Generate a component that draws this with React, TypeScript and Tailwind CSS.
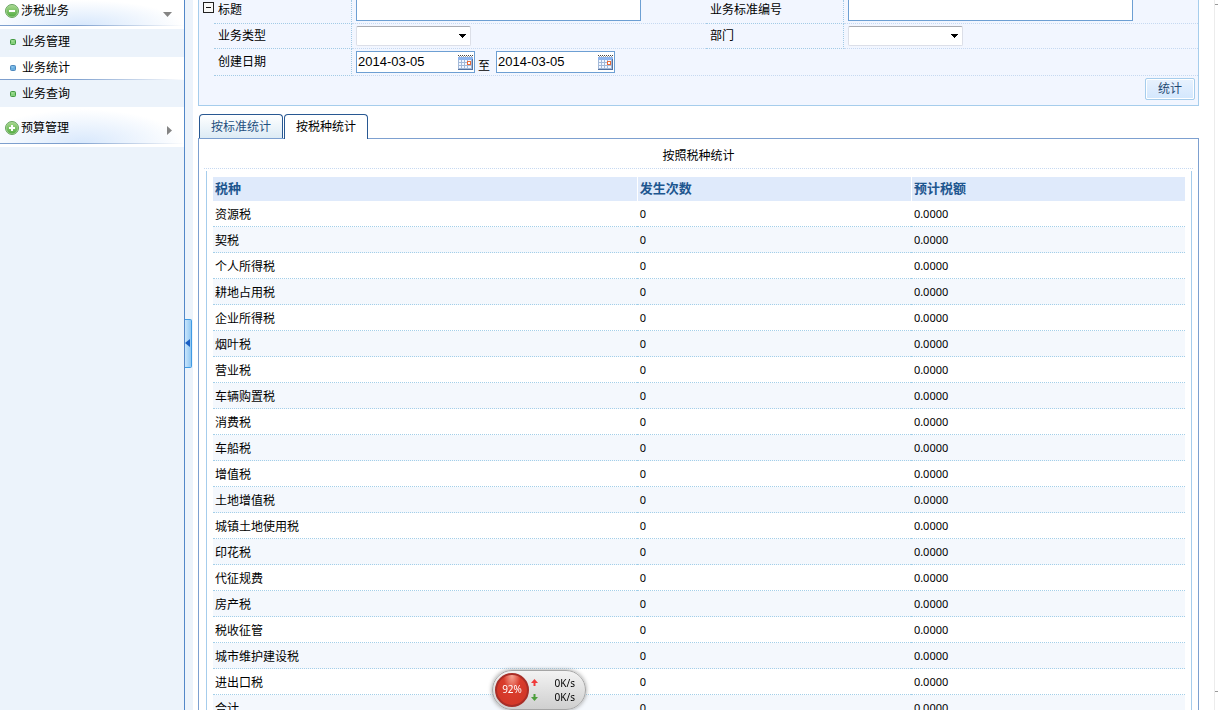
import { useState } from "react"

const taxes = [
    "资源税", "契税", "个人所得税", "耕地占用税", "企业所得税", "烟叶税", "营业税",
    "车辆购置税", "消费税", "车船税", "增值税", "土地增值税", "城镇土地使用税", "印花税",
    "代征规费", "房产税", "税收征管", "城市维护建设税", "进出口税", "合计",
]

function RoundIcon({ plus = false }: { plus?: boolean }) {
    return (
        <svg width="14" height="14" viewBox="0 0 14 14" className="shrink-0">
            <defs>
                <linearGradient id="leaf" x1="0" y1="0" x2="0" y2="1">
                    <stop offset="0" stopColor="#a5d88c" />
                    <stop offset="1" stopColor="#55ad43" />
                </linearGradient>
            </defs>
            <circle cx="7" cy="7" r="6.5" fill="#a9d59b" stroke="#68a55e" />
            <circle cx="7" cy="7" r="5.5" fill="url(#leaf)" />
            <path d={plus ? "M4 7h6M7 4v6" : "M4 7h6"} stroke="#fff" strokeWidth="2" />
        </svg>
    )
}

function Dot({ active = false }: { active?: boolean }) {
    return (
        <svg width="6" height="6" viewBox="0 0 6 6" className="shrink-0">
            <rect x="0.5" y="0.5" width="5" height="5" rx="1" fill={active ? "#68aee0" : "#85d07b"} stroke={active ? "#4f88bd" : "#459a43"} />
            <path d="M1.5 2h2" stroke={active ? "#a5d5f3" : "#b3e5a7"} />
        </svg>
    )
}

function CalendarIcon() {
    return (
        <svg width="15" height="16" viewBox="0 0 15 16" shapeRendering="crispEdges">
            <path d="M0 1.5h15" stroke="#444" strokeDasharray="1 1" />
            <path d="M1 2.5h14" stroke="#999" strokeDasharray="1 1" />
            <rect x="0" y="3" width="15" height="13" fill="#a3b9d8" />
            <rect x="0" y="3" width="15" height="3" fill="#8db4ee" />
            <path d="M1 6h2v2H1zM4 6h2v2H4zM7 6h2v2H7zM10 6h3v2h-3zM1 9h2v2H1zM4 9h2v2H4zM7 9h2v2H7zM10 9h3v2h-3zM1 12h2v2H1zM4 12h2v2H4zM7 12h2v2H7zM10 12h3v2h-3z" fill="#f2f7ff" />
            <path d="M0 15.5h15M14.5 5v11" stroke="#54719f" />
            <rect x="9.5" y="7.5" width="3" height="3" fill="#fff" stroke="#ec6a35" />
        </svg>
    )
}

function DateInput({ id, label }: { id: string; label: string }) {
    return (
        <div className="flex h-[22px] w-[119px] items-center border border-[#6d9fd3] bg-white pr-px">
            <input id={id} aria-label={label} defaultValue="2014-03-05" className="h-5 w-0 flex-1 pl-px pb-px font-['Liberation_Sans',sans-serif] text-[13px] outline-none" />
            <button type="button" aria-label="选择日期">
                <CalendarIcon />
            </button>
        </div>
    )
}

function SelectBox({ id }: { id: string }) {
    return (
        <div className="grid w-[115px] items-center">
            <select id={id} className="col-start-1 row-start-1 h-5 w-full appearance-none rounded-xs border border-[#dcdfe8] border-t-[#abadb3] bg-white outline-none">
                <option value=""></option>
            </select>
            <svg width="7" height="4" viewBox="0 0 7 4" className="pointer-events-none col-start-1 row-start-1 mr-[5px] justify-self-end">
                <path d="M0 0h7v1H6v1H5v1H4v1H3V3H2V2H1V1H0z" />
            </svg>
        </div>
    )
}

const fieldLabel = "flex items-center border-b border-r border-dotted border-[#a3cbe6] pl-1"
const fieldValue = "flex items-center border-b border-dotted border-[#c6d9f1] pl-1"

function SearchForm() {
    return (
        <form className="border border-t-0 border-[#a6cdec] bg-[#f2f6ff]" onSubmit={(e) => e.preventDefault()}>
            <div className="flex">
                <button type="button" aria-label="收起" className="ml-1 mt-[2px] flex h-[11px] w-[11px] shrink-0">
                    <svg width="11" height="11" viewBox="0 0 11 11">
                        <rect x="0.5" y="0.5" width="10" height="10" fill="#f8f8f8" stroke="#222" />
                        <path d="M3 5.5h5" stroke="#111" />
                    </svg>
                </button>
                <div className="grid flex-1 grid-cols-[138px_355fr_138px_355fr]">
                    <label htmlFor="title" className={`${fieldLabel} h-6 pb-1`}>标题</label>
                    <div className={`${fieldValue} items-start pr-[65px]`}>
                        <input id="title" className="h-[21px] w-full border border-t-0 border-[#6d9fd3] bg-white px-1 outline-none" />
                    </div>
                    <label htmlFor="code" className={`${fieldLabel} pb-1`}>业务标准编号</label>
                    <div className={`${fieldValue} items-start pr-[65px]`}>
                        <input id="code" className="h-[21px] w-full border border-t-0 border-[#6d9fd3] bg-white px-1 outline-none" />
                    </div>
                    <label htmlFor="type" className={`${fieldLabel} h-[25px]`}>业务类型</label>
                    <div className={fieldValue}><SelectBox id="type" /></div>
                    <label htmlFor="dept" className={fieldLabel}>部门</label>
                    <div className={fieldValue}><SelectBox id="dept" /></div>
                    <label htmlFor="from" className={`${fieldLabel} h-[27px]`}>创建日期</label>
                    <div className={`${fieldValue} col-span-3`}>
                        <DateInput id="from" label="开始日期" />
                        <span className="pl-[3px] pr-[6px] pt-2">至</span>
                        <DateInput id="to" label="结束日期" />
                    </div>
                </div>
            </div>
            <div className="flex h-[29px] justify-end pr-[3px] pt-[2px]">
                <button type="submit" className="h-[22px] w-[50px] rounded-xs border border-[#a6cdec] bg-linear-to-b from-[#e8f2fe] to-[#d3e7fd] pb-px text-xs text-[#1f4973] shadow-[inset_0_0_0_1px_#fff]">统计</button>
            </div>
        </form>
    )
}

function Sidebar() {
    const heading = "flex w-full items-center gap-[2px] border-b bg-[radial-gradient(ellipse_at_45%_100%,#d8e8fc,#fff_70%)] pl-[5px] pr-3 [border-image:linear-gradient(to_right,#7d9fce_40%,#fff)_1]"
    const item = "flex items-center gap-[6px] pl-[10px]"
    return (
        <nav className="w-[185px] shrink-0 border-r border-[#5287c8] bg-[#ecf3fb]">
            <div className="bg-white pb-[3px]">
                <button type="button" className={`${heading} h-[26px] pb-1`}>
                    <RoundIcon />
                    <span className="flex-1 text-left">涉税业务</span>
                    <svg width="9" height="5" viewBox="0 0 9 5" className="mt-2"><path d="M0 0h9L4.5 5z" fill="#848484" /></svg>
                </button>
            </div>
            <a href="#manage" className={`${item} h-7 pb-[2px]`}><Dot />业务管理</a>
            <a href="#stats" className={`${item} h-[23px] border-b bg-white [border-image:linear-gradient(to_right,#7d9fce_40%,#fff)_1]`}><Dot active />业务统计</a>
            <a href="#query" className={`${item} h-[27px]`}><Dot />业务查询</a>
            <div className="border-t-2 border-white bg-white pb-[3px]">
                <button type="button" className={`${heading} h-[35px] pt-1`}>
                    <RoundIcon plus />
                    <span className="flex-1 text-left">预算管理</span>
                    <svg width="5" height="9" viewBox="0 0 5 9" className="mt-1"><path d="M0 0v9L5 4.5z" fill="#848484" /></svg>
                </button>
            </div>
        </nav>
    )
}

function SpeedWidget() {
    return (
        <div className="fixed bottom-0 left-[492px] flex h-10 w-[94px] items-center rounded-full border border-[#a5a5a5] bg-linear-to-b from-[#f3f3f3] to-[#cfcfcf] pl-[2px] pr-[10px] font-['Noto_Sans',sans-serif] text-[10px] shadow-[0_0_4px_#999]">
            <div className="flex h-[34px] w-[34px] shrink-0 items-center justify-center rounded-full border-2 border-[#a82e27] bg-[radial-gradient(ellipse_at_50%_0%,#f7a998,#d93c2c_40%,#cf3525)] text-white">92%</div>
            <svg width="7" height="22" viewBox="0 0 7 22" className="ml-[2px]">
                <path d="M3.5 0L7 4H4.5v3h-2V4H0z" fill="#f03a3a" />
                <path d="M3.5 22L7 18H4.5v-3h-2v3H0z" fill="#4c9e3c" />
            </svg>
            <div className="flex-1 text-right leading-[14px]">
                <div>0K/s</div>
                <div>0K/s</div>
            </div>
        </div>
    )
}

const headCell = "border-l border-white p-0 pl-[2px] font-bold"
const cell = "border-b border-dotted border-[#a3cfe9] p-0 pt-[2px]"

export default function App() {
    const [tab, setTab] = useState(1)
    const tabs = ["按标准统计", "按税种统计"]
    return (
        <div className="flex h-screen overflow-hidden bg-white font-['Liberation_Sans','Noto_Sans_CJK_SC',sans-serif] text-xs text-black">
            <Sidebar />
            <div className="flex w-2 shrink-0 items-center bg-[#ecf3fb]">
                <button type="button" aria-label="折叠菜单" className="mb-6 flex h-[49px] w-[7px] items-center rounded-r-xs border border-l-0 border-[#3f9be4] bg-linear-to-r from-[#c9e5fb] to-[#8fc7f3]">
                    <svg width="5" height="8" viewBox="0 0 5 8"><path d="M5 0v8L0 4z" fill="#1a5fc4" /></svg>
                </button>
            </div>
            <main className="min-w-0 flex-1 pl-[5px] pr-[15px]">
                <SearchForm />
                <div role="tablist" className="mt-2 flex gap-px pl-px">
                    {tabs.map((name, i) => (
                        <button
                            key={name}
                            type="button"
                            role="tab"
                            aria-selected={tab === i}
                            onClick={() => setTab(i)}
                            className={tab === i
                                ? "z-10 -mb-px h-[25px] w-[84px] rounded-t border border-b-0 border-[#285892] bg-white"
                                : "h-6 w-[84px] rounded-t border border-b-0 border-[#285892] bg-linear-to-b from-white to-[#dcebf5] text-[#1f4f80]"}
                        >
                            {name}
                        </button>
                    ))}
                </div>
                <section className="border border-[#7da0d0] px-[5px]">
                    <h2 className="h-[30px] border-b border-dotted border-[#c6d9f1] pt-px text-center leading-8">按照税种统计</h2>
                    <div className="ml-[2px] mr-px mt-[2px] border-x border-[#a6cdec] px-[6px] pt-[6px]">
                        <table className="w-full table-fixed border-separate border-spacing-0 text-left">
                            <colgroup>
                                <col className="w-[43.6%]" />
                                <col className="w-[28.2%]" />
                                <col />
                            </colgroup>
                            <thead>
                                <tr className="h-6 bg-[#dfeafb] text-[13px] text-[#1d568f]">
                                    <th className="p-0 pl-[2px] font-bold">税种</th>
                                    <th className={headCell}>发生次数</th>
                                    <th className={headCell}>预计税额</th>
                                </tr>
                            </thead>
                            <tbody>
                                {taxes.map((name) => (
                                    <tr key={name} className="h-[26px] even:bg-[#f4f8fd]">
                                        <td className={`${cell} pl-[2px]`}>{name}</td>
                                        <td className={`${cell} pl-[3px] font-['Noto_Sans',sans-serif] text-[11px]`}>0</td>
                                        <td className={`${cell} pl-[3px] font-['Noto_Sans',sans-serif] text-[11px]`}>0.0000</td>
                                    </tr>
                                ))}
                            </tbody>
                        </table>
                    </div>
                </section>
            </main>
            <div className="flex w-1 shrink-0 flex-col justify-between border-l border-[#ececec] bg-white pb-[18px] pt-1">
                <div className="h-px bg-[#999]" />
                <div className="h-px bg-[#999]" />
            </div>
            <SpeedWidget />
        </div>
    )
}
